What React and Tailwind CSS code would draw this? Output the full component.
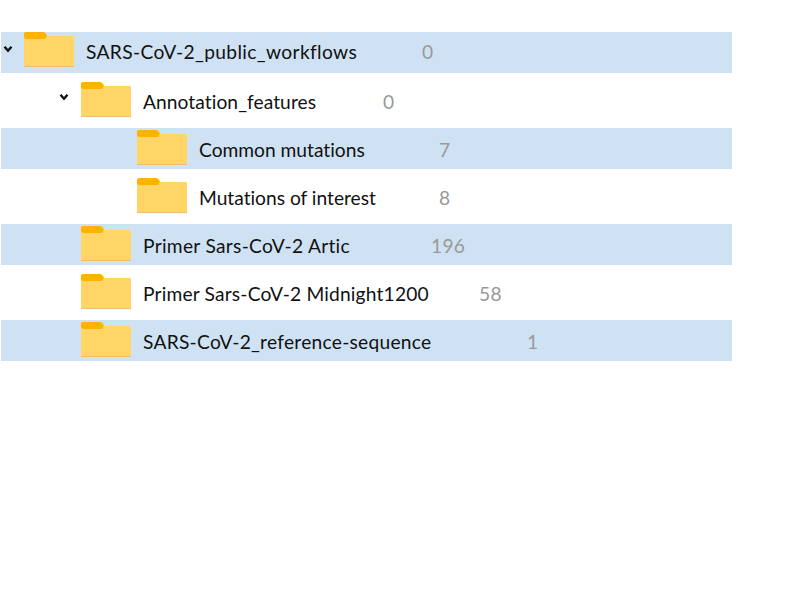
function Folder() {
  return (
    <svg width="50" height="36" viewBox="0 0 50 36" className="shrink-0">
      <path d="M0 4h49a1 1 0 0 1 1 1V34a1 1 0 0 1-1 1H1a1 1 0 0 1-1-1Z" fill="#ffd666" />
      <rect x="0" y="34" width="50" height="1" fill="#f2bc6c" />
      <path d="M0 2a2 2 0 0 1 2-2h16.500c1.500 0 2.500.5 3.500 2l1 1.500-1 2c-.5 1.200-1.200 1.500-2 1.500H2a2 2 0 0 1-2-2Z" fill="#ffb300" />
    </svg>
  );
}

function Chevron() {
  return (
    <svg width="10" height="8" viewBox="0 0 10 8">
      <path d="M1.500 1.800 5 5.800 8.500 1.800" fill="none" stroke="#111" strokeWidth="2.400" />
    </svg>
  );
}

const rows = [
  { name: "SARS-CoV-2_public_workflows", count: "0", blue: true, open: true, pad: "pl-0", chev: "w-[23px] pl-[2px] -mt-2", text: "w-[336px] tracking-[0.36px]", shift: "pt-0" },
  { name: "Annotation_features", count: "0", open: true, pad: "pl-[57px]", chev: "w-[23px] pl-px -mt-3", text: "w-[240px] tracking-[0.07px]", shift: "pt-1" },
  { name: "Common mutations", count: "7", blue: true, pad: "pl-[136px]", chev: "w-0", text: "w-[240px] tracking-[0px]", shift: "pt-1" },
  { name: "Mutations of interest", count: "8", pad: "pl-[136px]", chev: "w-0", text: "w-[240px] tracking-[0px]", shift: "pt-1" },
  { name: "Primer Sars-CoV-2 Artic", count: "196", blue: true, pad: "pl-[80px]", chev: "w-0", text: "w-[288px] tracking-[0.3px]", shift: "pt-1" },
  { name: "Primer Sars-CoV-2 Midnight1200", count: "58", pad: "pl-[80px]", chev: "w-0", text: "w-[336px] tracking-[0.18px]", shift: "pt-1" },
  { name: "SARS-CoV-2_reference-sequence", count: "1", blue: true, pad: "pl-[80px]", chev: "w-0", text: "w-[384px] tracking-[0.26px]", shift: "pt-1" },
];

export default function App() {
  return (
    <div className="min-h-[600px] bg-white pt-8 pl-px font-['Lato','Noto_Sans',sans-serif]">
      <div className="flex w-[731px] flex-col gap-[7px]">
        {rows.map((r) => (
          <div key={r.name} className={`flex h-[41px] items-center ${r.pad} ${r.shift} ${r.blue ? "bg-[#cfe2f3]" : "bg-white"}`}>
            <div className={`${r.chev} flex shrink-0`}>{r.open && <Chevron />}</div>
            <div className="-mt-[5px] mr-3 flex"><Folder /></div>
            <div className={`${r.text} shrink-0 text-[19.2px] text-[#111] [font-variant-ligatures:none]`}>{r.name}</div>
            <div className="text-[19.2px] tracking-[0.3px] text-[#999]">{r.count}</div>
          </div>
        ))}
      </div>
    </div>
  );
}
